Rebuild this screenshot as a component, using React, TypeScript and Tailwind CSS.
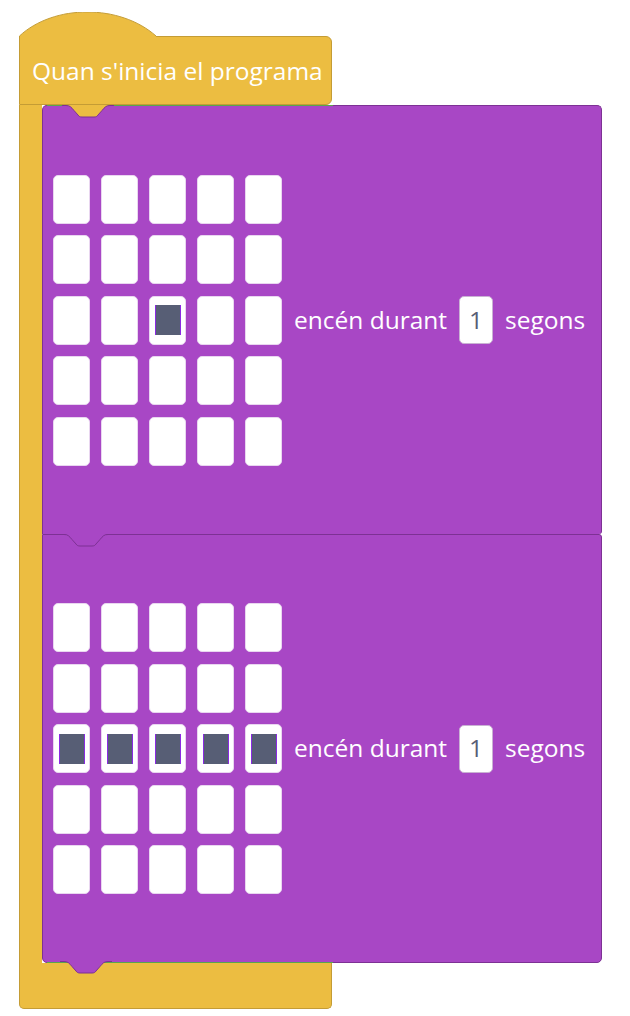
import React from 'react';

// Two "show leds" blocks inside a "when program starts" hat block
const YELLOW = 'bg-[#ecbd41]';

type Grid = number[][];

const gridOne: Grid = [
  [0, 0, 0, 0, 0],
  [0, 0, 0, 0, 0],
  [0, 0, 1, 0, 0],
  [0, 0, 0, 0, 0],
  [0, 0, 0, 0, 0],
];

const gridTwo: Grid = [
  [0, 0, 0, 0, 0],
  [0, 0, 0, 0, 0],
  [1, 1, 1, 1, 1],
  [0, 0, 0, 0, 0],
  [0, 0, 0, 0, 0],
];

const Notch: React.FC<{ fill: string; className: string }> = ({ fill, className }) => (
  <svg className={className} width="52" height="13" viewBox="0 0 52 13">
    <path d="M0 0.5 L4 0.5 C8 0.5 9 2 12 5.5 L16 10 C17 11.5 18 12 20 12 L32 12 C34 12 35 11.5 36 10 L40 5.5 C43 2 44 0.5 48 0.5 L52 0.5 L52 0 L0 0 Z" fill={fill} />
    <path d="M0 0.5 L4 0.5 C8 0.5 9 2 12 5.5 L16 10 C17 11.5 18 12 20 12 L32 12 C34 12 35 11.5 36 10 L40 5.5 C43 2 44 0.5 48 0.5 L52 0.5" fill="none" stroke="#7d3194" strokeWidth="1" />
  </svg>
);

const LedCell: React.FC<{ on: boolean }> = ({ on }) => (
  <div className="w-[37px] h-[49px] rounded-[5px] bg-white border border-[#e9d6f0] flex items-center justify-center">
    {on && <div className="w-[26px] h-[30px] bg-[#575e75] border-x border-[#8a2be2]" />}
  </div>
);

const ShowBlock: React.FC<{ grid: Grid; first?: boolean; last?: boolean }> = ({ grid, first, last }) => (
  <div
    className={
      'relative w-[560px] h-[429px] bg-[#a847c5] border border-[#7d3194] flex items-center pl-[10px] ' +
      (first ? 'rounded-t-[5px] ' : 'rounded-tr-[3px] ') +
      (last ? 'rounded-b-[5px]' : 'border-b-0 rounded-br-[3px]')
    }
  >
    {first && <div className="absolute -top-[1px] left-[4px] w-[286px] h-[1px] bg-[#5aa64c]" />}
    {last && <div className="absolute -bottom-[1px] left-[4px] w-[286px] h-[1px] bg-[#5aa64c]" />}
    {first && <Notch fill="#ecbd41" className="absolute left-[19px] -top-[1px]" />}
    {!first && <Notch fill="#a847c5" className="absolute left-[17px] -top-[1px]" />}
    {last && <Notch fill="#a847c5" className="absolute left-[17px] -bottom-[12px] z-10" />}
    <div className="flex flex-col gap-y-[11.5px]">
      {grid.map((row, i) => (
        <div key={i} className="flex gap-[11px]">
          {row.map((v, j) => (
            <LedCell key={j} on={v === 1} />
          ))}
        </div>
      ))}
    </div>
    <div className="flex items-center ml-[12px] text-white text-[24.5px]">
      <span>encén durant</span>
      <div className="w-[34px] h-[48px] ml-[12px] mr-[12px] rounded-[5px] bg-white border border-[#c9b2d3] flex items-center justify-center text-[#575e75]">
        1
      </div>
      <span>segons</span>
    </div>
  </div>
);

const App: React.FC = () => {
  return (
    <div
      className="w-[630px] h-[1016px] bg-white pt-[12px] pl-[19px] flex flex-col"
      style={{ fontFamily: '"Open Sans", "Noto Sans", sans-serif' }}
    >
      {/* hat bump */}
      <div className="relative h-[24px] w-[313px]">
        <svg className="absolute left-0 top-0 z-10" width="140" height="26" viewBox="0 0 140 26">
          <path d="M0.5 26 L0.5 24 C 35 -8, 101 -8, 137 24 L137 26 Z" fill="#ecbd41" />
          <path d="M0.5 26 L0.5 24 C 35 -8, 101 -8, 137 24" fill="none" stroke="#c49c35" strokeWidth="1" />
        </svg>
      </div>

      {/* hat header */}
      <div className={`w-[313px] h-[69px] ${YELLOW} border border-[#c49c35] rounded-tr-[6px] rounded-br-[6px] flex items-center pl-[12px] pt-[2px] text-white text-[24.5px]`}>
        Quan s'inicia el programa
      </div>

      {/* body with C arm */}
      <div className="flex">
        <div className={`w-[23px] ${YELLOW} border-l border-[#c49c35]`} />
        <div className="flex flex-col">
          <ShowBlock grid={gridOne} first />
          <ShowBlock grid={gridTwo} last />
        </div>
      </div>

      {/* C foot */}
      <div className={`w-[313px] h-[46px] ${YELLOW} border border-t-0 border-[#c49c35] rounded-b-[5px]`} />
    </div>
  );
};

export default App;
